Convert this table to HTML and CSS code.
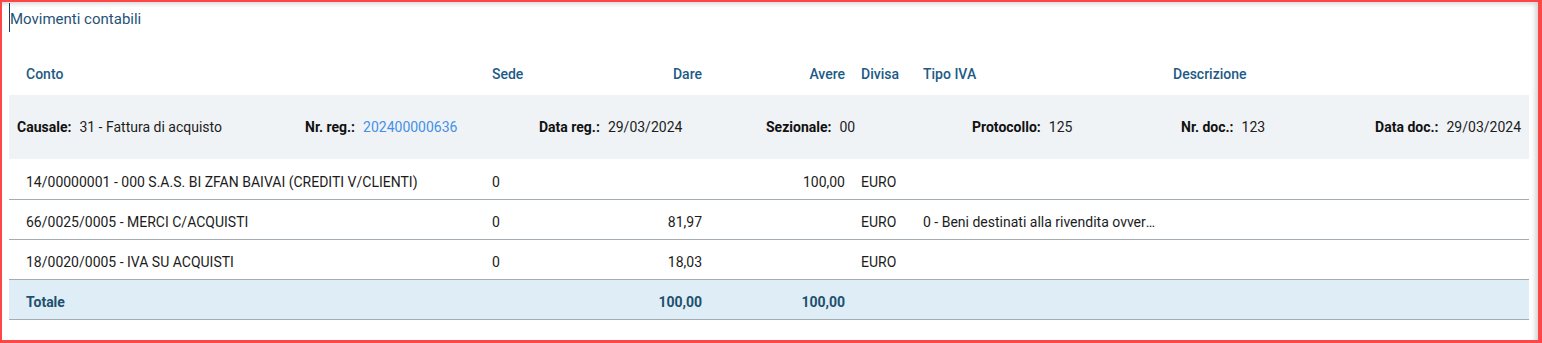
FILE: index.html
```html
<!DOCTYPE html>
<html lang="it">
<head>
<meta charset="utf-8">
<title>Movimenti contabili</title>
<link rel="stylesheet" href="styles.css">
</head>
<body>
<div class="frame">
  <div class="title">Movimenti contabili</div>
  <table class="grid">
    <colgroup>
      <col class="c-conto"><col class="c-sede"><col class="c-dare"><col class="c-avere"><col class="c-divisa"><col class="c-iva"><col class="c-descr">
    </colgroup>
    <thead>
      <tr>
        <th class="first">Conto</th>
        <th>Sede</th>
        <th class="num">Dare</th>
        <th class="num">Avere</th>
        <th>Divisa</th>
        <th>Tipo IVA</th>
        <th>Descrizione</th>
      </tr>
    </thead>
    <tbody>
      <tr class="band">
        <td colspan="7">
          <div class="band-grid">
            <div class="item"><b>Causale:</b><span>31 - Fattura di acquisto</span></div>
            <div class="item"><b>Nr. reg.:</b><span class="link">202400000636</span></div>
            <div class="item"><b>Data reg.:</b><span>29/03/2024</span></div>
            <div class="item"><b>Sezionale:</b><span>00</span></div>
            <div class="item"><b>Protocollo:</b><span>125</span></div>
            <div class="item"><b>Nr. doc.:</b><span>123</span></div>
            <div class="item last"><b>Data doc.:</b><span>29/03/2024</span></div>
          </div>
        </td>
      </tr>
      <tr class="row">
        <td class="first">14/00000001 - 000 S.A.S. BI ZFAN BAIVAI (CREDITI V/CLIENTI)</td>
        <td>0</td>
        <td class="num"></td>
        <td class="num">100,00</td>
        <td>EURO</td>
        <td class="ell"></td>
        <td></td>
      </tr>
      <tr class="row">
        <td class="first">66/0025/0005 - MERCI C/ACQUISTI</td>
        <td>0</td>
        <td class="num">81,97</td>
        <td class="num"></td>
        <td>EURO</td>
        <td class="ell"><div class="clip">0 - Beni destinati alla rivendita ovvero alla produzione di beni</div></td>
        <td></td>
      </tr>
      <tr class="row">
        <td class="first">18/0020/0005 - IVA SU ACQUISTI</td>
        <td>0</td>
        <td class="num">18,03</td>
        <td class="num"></td>
        <td>EURO</td>
        <td class="ell"></td>
        <td></td>
      </tr>
      <tr class="total">
        <td class="first">Totale</td>
        <td></td>
        <td class="num">100,00</td>
        <td class="num">100,00</td>
        <td></td>
        <td></td>
        <td></td>
      </tr>
    </tbody>
  </table>
</div>
</body>
</html>
```
FILE: styles.css
```css
html, body {
  margin: 0;
  padding: 0;
  height: 100%;
  background: #ffffff;
}
body {
  font-family: Roboto, "Liberation Sans", Arial, sans-serif;
  font-size: 14px;
  color: #1c1c1c;
  overflow: hidden;
}
.frame {
  box-sizing: border-box;
  height: 343px;
  width: 1542px;
  border-style: solid;
  border-color: #fb4747;
  border-width: 2px 4px 3px 2px;
  padding: 1px 9px 0 7px;
  box-shadow: inset -5px 4px 4px -2px rgba(0, 0, 0, 0.16);
  background: #ffffff;
}
.title {
  border-left: 1px solid #1d3f5c;
  padding: 7px 0 4px 0;
  line-height: 18px;
  font-size: 15px;
  color: #1f5377;
}
.grid {
  margin-top: 21px;
  width: 1520px;
  border-collapse: collapse;
  table-layout: fixed;
}
.c-conto { width: 475px; }
.c-sede { width: 83px; }
.c-dare { width: 143px; }
.c-avere { width: 143px; }
.c-divisa { width: 62px; }
.c-iva { width: 250px; }
.c-descr { width: 364px; }

th {
  height: 42px;
  padding: 0 8px;
  text-align: left;
  font-weight: 500;
  color: #1d5b86;
  vertical-align: middle;
  white-space: nowrap;
}
th.first, td.first { padding-left: 17px; }
.num { text-align: right; }

.band td {
  background: #f0f3f6;
  height: 64px;
  padding: 0 8px;
  box-sizing: border-box;
}
.band-grid {
  display: grid;
  grid-template-columns: 288px 234px 227px 206px 209px 194px 1fr;
  align-items: center;
}
.item {
  display: flex;
  gap: 8px;
  white-space: nowrap;
}
.item b {
  font-weight: 700;
  color: #111;
}
.item.last { justify-self: end; }
.link { color: #4590e6; }

.row td, .total td {
  box-sizing: border-box;
  height: 40px;
  padding: 6px 8px 0 8px;
  border-bottom: 1px solid #a3abb3;
  vertical-align: middle;
  white-space: nowrap;
}
.row td.first, .total td.first { padding-left: 17px; }
.ell { overflow: hidden; }
.clip {
  overflow: hidden;
  text-overflow: ellipsis;
  white-space: nowrap;
  max-width: 234px;
}
.total td {
  background: #dfeef6;
  font-weight: 700;
  color: #1e506f;
}
```
